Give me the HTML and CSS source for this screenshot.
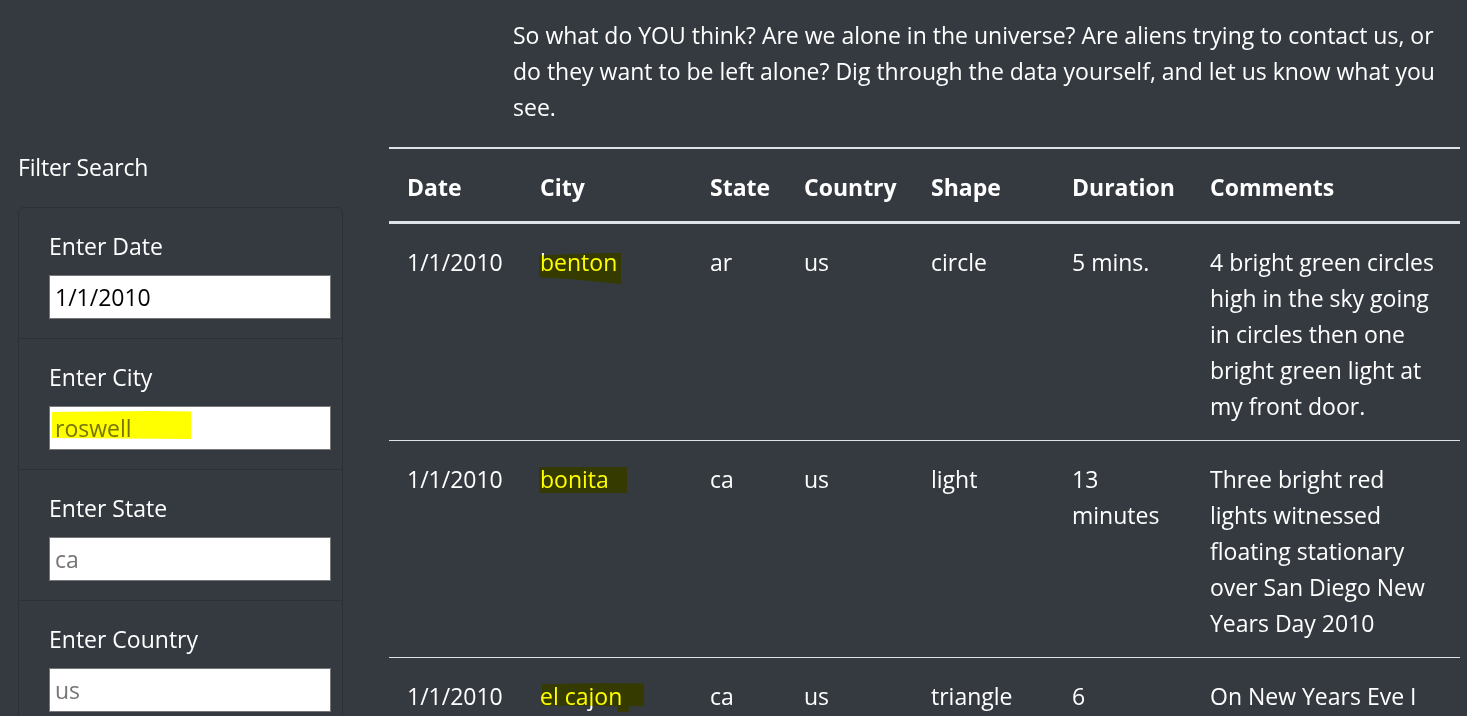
FILE: index.html
```html
<!DOCTYPE html>
<html lang="en">
<head>
<meta charset="utf-8">
<title>UFO Sightings</title>
<link rel="stylesheet" href="styles.css">
</head>
<body>
<div class="page">
  <p class="intro">So what do YOU think? Are we alone in the universe? Are aliens trying to contact us, or do they want to be left alone? Dig through the data yourself, and let us know what you see.</p>
  <div class="main">
    <aside class="filters">
      <div class="filter-title">Filter Search</div>
      <ul class="card">
        <li class="item">
          <label class="label" for="date">Enter Date</label>
          <div class="field"><input class="input" id="date" type="text" value="1/1/2010"></div>
        </li>
        <li class="item">
          <label class="label" for="city">Enter City</label>
          <div class="field"><input class="input" id="city" type="text" placeholder="roswell"><span class="marker marker-input"></span></div>
        </li>
        <li class="item">
          <label class="label" for="state">Enter State</label>
          <div class="field"><input class="input" id="state" type="text" placeholder="ca"></div>
        </li>
        <li class="item">
          <label class="label" for="country">Enter Country</label>
          <div class="field"><input class="input" id="country" type="text" placeholder="us"></div>
        </li>
      </ul>
    </aside>
    <section class="results">
      <table class="table">
        <colgroup>
          <col class="c-date"><col class="c-city"><col class="c-state"><col class="c-country"><col class="c-shape"><col class="c-duration"><col class="c-comments">
        </colgroup>
        <thead>
          <tr><th>Date</th><th>City</th><th>State</th><th>Country</th><th>Shape</th><th>Duration</th><th>Comments</th></tr>
        </thead>
        <tbody>
          <tr>
            <td>1/1/2010</td>
            <td><span class="hl">benton<span class="marker m-benton"></span></span></td>
            <td>ar</td><td>us</td><td>circle</td><td>5 mins.</td>
            <td>4 bright green circles high in the sky going in circles then one bright green light at my front door.</td>
          </tr>
          <tr>
            <td>1/1/2010</td>
            <td><span class="hl">bonita<span class="marker m-bonita"></span></span></td>
            <td>ca</td><td>us</td><td>light</td><td>13 minutes</td>
            <td>Three bright red lights witnessed floating stationary over San Diego New Years Day 2010</td>
          </tr>
          <tr>
            <td>1/1/2010</td>
            <td><span class="hl">el cajon<span class="marker m-cajon"></span></span></td>
            <td>ca</td><td>us</td><td>triangle</td><td>6 minutes</td>
            <td>On New Years Eve I saw three orange lights moving slowly across the sky.</td>
          </tr>
        </tbody>
      </table>
    </section>
  </div>
</div>
</body>
</html>
```

FILE: styles.css
```css
html, body {
  margin: 0;
  padding: 0;
}

body {
  background: #343a40;
  color: #ffffff;
  font-family: "Open Sans", "Noto Sans", sans-serif;
  font-size: 23px;
  line-height: 36px;
  overflow: hidden;
}

.page {
  padding-top: 17px;
}

.intro {
  margin: 0 0 22px 513px;
  width: 940px;
}

.main {
  display: flex;
  align-items: flex-start;
}

.filters {
  width: 325px;
  margin-left: 18px;
  padding-top: 2px;
  flex: none;
}

.filter-title {
  line-height: 36px;
  margin-bottom: 22px;
  letter-spacing: -0.2px;
}

.card {
  list-style: none;
  margin: 0;
  padding: 0;
  border: 1px solid rgba(0, 0, 0, 0.14);
  border-radius: 6px;
}

.item {
  padding: 20px 30px 19px;
  border-bottom: 1px solid rgba(0, 0, 0, 0.14);
}

.item:last-child {
  border-bottom: none;
}

.label {
  display: block;
  line-height: 36px;
  margin-bottom: 11px;
}

.field {
  position: relative;
  width: 282px;
  height: 44px;
}

.input {
  box-sizing: border-box;
  width: 282px;
  height: 44px;
  margin: 0;
  padding: 0 5px;
  border: 1px solid #767676;
  border-radius: 0;
  background: #ffffff;
  color: #000000;
  font-family: inherit;
  font-size: 23px;
  outline: none;
}

.input::placeholder {
  color: #757575;
  opacity: 1;
}

.marker {
  position: absolute;
  background: #ffff00;
  mix-blend-mode: multiply;
  pointer-events: none;
}

.marker-input {
  left: 3px;
  top: 5px;
  width: 139px;
  height: 28px;
  clip-path: polygon(0 4%, 70% 0, 100% 2%, 100% 100%, 0 96%);
}

.results {
  margin-left: 46px;
  width: 1071px;
  flex: none;
}

.table {
  width: 1071px;
  table-layout: fixed;
  border-collapse: collapse;
  border-top: 2px solid #dee2e6;
}

.c-date { width: 133px; }
.c-city { width: 170px; }
.c-state { width: 94px; }
.c-country { width: 127px; }
.c-shape { width: 141px; }
.c-duration { width: 138px; }
.c-comments { width: 268px; }

.table th,
.table td {
  padding: 20px 18px 16px;
  text-align: left;
  vertical-align: top;
}

.table th {
  font-weight: 700;
  border-bottom: 3px solid #dee2e6;
}

.table td {
  border-bottom: 1px solid #dee2e6;
}

.hl {
  position: relative;
  display: inline-block;
}

.m-benton {
  left: -1px;
  top: 9px;
  width: 82px;
  height: 31px;
  clip-path: polygon(0 8%, 75% 0, 100% 0, 100% 100%, 40% 85%, 0 78%);
}

.m-bonita {
  left: -1px;
  top: 6px;
  width: 88px;
  height: 26px;
}

.m-cajon {
  left: 2px;
  top: 5px;
  width: 102px;
  height: 29px;
  clip-path: polygon(0 4%, 60% 0, 100% 2%, 100% 80%, 85% 80%, 85% 100%, 74% 100%, 74% 80%, 0 78%);
}
```
